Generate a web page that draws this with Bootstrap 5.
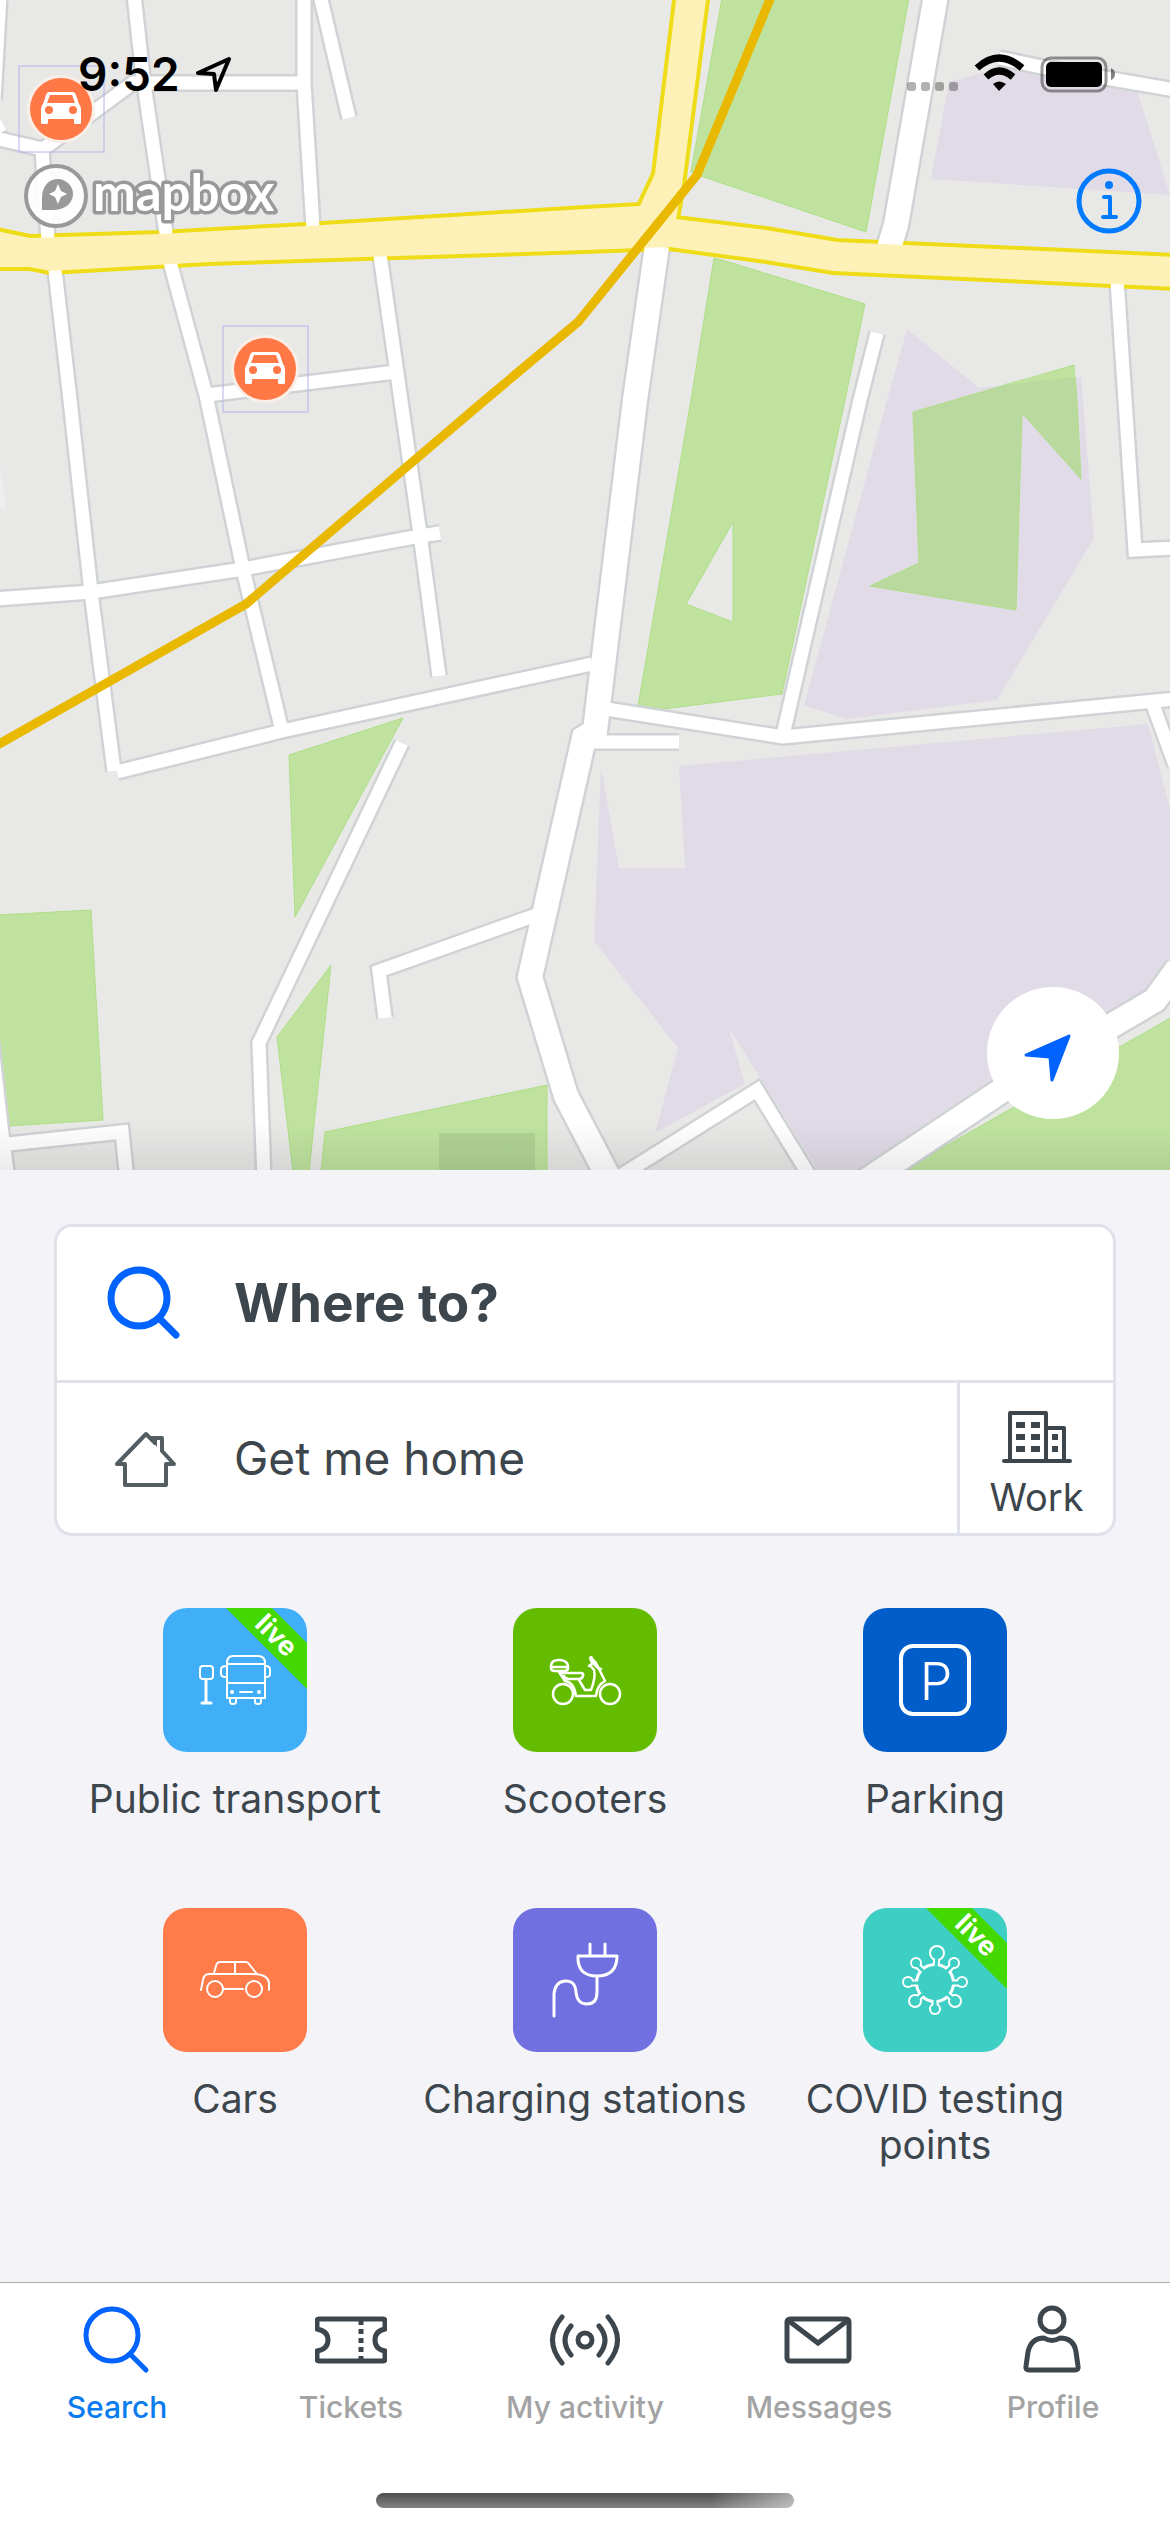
<!DOCTYPE html>
<html lang="en">
<head>
<meta charset="utf-8">
<meta name="viewport" content="width=device-width, initial-scale=1">
<title>Search</title>
<link href="https://cdn.jsdelivr.net/npm/bootstrap@5.3.0/dist/css/bootstrap.min.css" rel="stylesheet">
<style>
  :root { --ink: #3c464c; --line: #dfe2ea; --blue: #0062ff; --ios: #007aff; }
  body { background: #f3f3f8; color: var(--ink); font-family: Inter, "Liberation Sans", sans-serif; }
  svg { display: block; }
  a { color: inherit; text-decoration: none; }
  .map-area svg.map-canvas { width: 100%; height: auto; }
  .map-shade { bottom: 0; height: 48px; background: linear-gradient(rgba(0,0,0,0), rgba(0,0,0,.08)); }
  .status-bar { top: 0; padding: 44px 52px 0 78px; color: #000; }
  .clock { font-size: 46px; line-height: 60px; font-weight: 600; }
  .info-btn { top: 164px; right: 24px; }
  .locate-btn { right: 51px; bottom: 51px; width: 132px; height: 132px; background: #fff; }
  .search-wrap { padding: 54px 54px 0; }
  .search-card { border: 3px solid var(--line); border-radius: 18px; background: #fff; }
  .plain-btn { border: 0; background: none; color: inherit; text-align: left; padding: 0 0 0 51px; gap: 54px; }
  .plain-btn svg { overflow: visible; }
  .where-row { height: 156px; border-bottom: 3px solid var(--line); font-size: 53px; font-weight: 700; }
  .home-row { height: 150px; }
  .home-btn { font-size: 46px; }
  .work-btn { width: 156px; border: 0; border-left: 3px solid var(--line); background: none; color: inherit; padding: 27px 0 0; gap: 10px; font-size: 38px; line-height: 46px; }
  .services { padding: 72px 60px 0; }
  .service { height: 300px; gap: 24px; font-size: 39px; line-height: 46px; }
  .tile { width: 144px; height: 144px; border-radius: 24px; overflow: hidden; }
  .tile svg { fill: none; stroke: #fff; stroke-linecap: round; stroke-linejoin: round; }
  .tile text { fill: #fff; stroke: none; font-family: Inter, sans-serif; }
  .tile-transit { background: #40aff8; }
  .tile-scooter { background: #64bc00; }
  .tile-parking { background: #005dca; }
  .tile-cars { background: #ff7b4a; }
  .tile-charge { background: #7170e1; }
  .tile-covid { background: #3dcec4; }
  .tab-bar { background: #fff; border-top: 1px solid #a9aaac; padding: 21px 0 24px; }
  .tab-item { flex: 1 1 0; gap: 13px; font-size: 30px; line-height: 36px; font-weight: 500; color: #a3a3a3; }
  .tab-item svg { fill: none; stroke: var(--ink); stroke-width: 5; stroke-linecap: round; stroke-linejoin: round; }
  .tab-item.active { color: #0a7cf0; }
  .tab-item.active svg { stroke: var(--blue); }
  .home-bar { width: 418px; height: 15px; border-radius: 8px; margin-top: 68px; background: linear-gradient(90deg, rgba(255,255,255,0) 80%, rgba(255,255,255,.5)), linear-gradient(#4e4e4e, #828282); }
</style>
</head>
<body>
<div class="d-flex flex-column min-vh-100">

  <section class="map-area position-relative" aria-label="Map">
    <svg class="map-canvas" viewBox="0 0 1170 1170" aria-hidden="true">
      <defs>
        <g id="minor">
          <path d="M134 -5L143 77L167 240M170 262L206 395L243 569L282 731"/>
          <path d="M43 149L133 83H302"/>
          <path d="M304 -5V83L313 228M320 -5L349 118"/>
          <path d="M-5 138L42 149L48 240M55 270L70 400L91 592L114 771"/>
          <path d="M0 -5L-6 100M-8 130L3 124"/>
          <path d="M117 772L282 731L592 664"/>
          <path d="M-5 599L91 592L243 569L420 536L440 533"/>
          <path d="M380 255L397 373L420 534L439 676M207 395L396 372"/>
          <path d="M402 743L259 1043L264 1180"/>
          <path d="M536 915L379 971L385 1018"/>
          <path d="M877 333L860 400L783 735"/>
          <path d="M600 708L783 737L1175 699M592 742H679"/>
          <path d="M1117 280L1125 400L1135 550L1175 548M1153 705L1175 765"/>
          <path d="M999 58L1042 67L1175 90"/>
          <path d="M614 1180L757 1090L812 1180"/>
          <path d="M-12 1010L1 1126L8 1180M8 1144L122 1132L127 1180"/>
        </g>
        <g id="major">
          <path d="M657 246L635 400L595 731L584 738L530 977L566 1096L612 1184"/>
          <path d="M936 -5L896 225L889 248"/>
          <path d="M1178 968L1155 1000L1111 1026L1001 1091L860 1185"/>
        </g>
        <path id="avenue" d="M-8 230L30 238L160 234L306 226L585 209L640 206L655 174L677 -8H707L682 185L676 219L766 230L837 242L1178 257V287L833 271L766 260L669 247L585 250L209 262L50 271L30 267H-8Z"/>
        <g id="car-pin">
          <rect x="-42" y="-43" width="85" height="86" fill="none" stroke="#b5b2ee"/>
          <circle r="34" fill="#fbeee6"/>
          <circle r="31" fill="#ff7846"/>
          <path d="M-12 -17H12Q14 -17 15 -14L18 -5Q20 -3 20 0V14Q20 15 18 15H14Q13 15 13 13V10H-13V13Q-13 15 -14 15H-18Q-20 15 -20 14V0Q-20 -3 -18 -5L-15 -14Q-14 -17 -12 -17ZM-11 -14L-14 -6H14L11 -14ZM-12 -3A4 4 0 1 0 -12 5A4 4 0 1 0 -12 -3ZM12 -3A4 4 0 1 0 12 5A4 4 0 1 0 12 -3Z" fill="#fff" fill-rule="evenodd"/>
        </g>
      </defs>
      <path fill="#e8e9e7" d="M0 0H1170V1170H0Z"/>
      <g fill="#e1dbe7">
        <path d="M949 82L999 68L1137 90L1170 195L931 179Z"/>
        <path d="M907 329L979 388L1081 377L1083 400L1094 538L997 700L848 719L804 706L887 400Z"/>
        <path d="M679 766L1148 724L1170 808V975L1154 1000L850 1180H824L729 1028L745 1084L655 1133L678 1048L594 941L601 767L619 868H685Z"/>
      </g>
      <g fill="#bfe39f" stroke="#aede85" stroke-width="1">
        <path d="M722 -2H909L866 232L701 176L691 172Z"/>
        <path fill-rule="evenodd" d="M714 258L732 263L865 304L845 400L782 694L663 709L638 706L691 400ZM733 522V622L686 604Z"/>
        <path fill="#b9d99e" d="M1074 365L1077 400L1081 479L1022 413L1016 610L870 586L919 563L913 412Z"/>
        <path stroke="none" d="M1001 385L1074 366L1075 377Z"/>
        <path d="M289 755L403 718L295 917Z"/>
        <path d="M331 965L277 1037L293 1172H309Z"/>
        <path d="M-2 915L91 910L103 1120L8 1126L-2 1020Z"/>
        <path d="M325 1132L547 1085V1172H321Z"/>
        <path d="M1172 1017L900 1172H1172Z"/>
      </g>
      <path fill="#b0d494" d="M439 1133H535V1170H439Z"/>
      <path fill="#eeeeef" d="M0 465L6 508H0Z"/>
      <g fill="none" stroke="#d0d3d6">
        <use href="#minor" stroke-width="18"/>
        <use href="#major" stroke-width="29"/>
      </g>
      <use href="#avenue" fill="none" stroke="#efdc18" stroke-width="8"/>
      <g fill="none" stroke="#fff">
        <use href="#minor" stroke-width="13"/>
        <use href="#major" stroke-width="24"/>
      </g>
      <use href="#avenue" fill="#fef1b8"/>
      <path d="M773 -8L697 175L578 322L485 400L246 604L-8 748" fill="none" stroke="#e9b800" stroke-width="9"/>
      <use href="#car-pin" x="61" y="109"/>
      <use href="#car-pin" x="265" y="369"/>
      <circle cx="56" cy="196" r="30" fill="#fff" fill-opacity=".9" stroke="#999" stroke-width="4"/>
      <path d="M42 210V198C42 186 49 179 58 179C66 179 73 186 73 194C73 203 65 210 53 210Z" fill="#999"/>
      <path d="M58 184L61 191L67 194L61 197L58 204L55 197L49 194L55 191Z" fill="#fff"/>
      <text x="93" y="211" font-family="Lato, sans-serif" font-size="51" font-weight="700" fill="#fff" stroke="#999" stroke-width="7" stroke-linejoin="round" paint-order="stroke">mapbox</text>
    </svg>
    <div class="map-shade position-absolute start-0 end-0"></div>

    <div class="status-bar position-absolute start-0 end-0 d-flex justify-content-between">
      <div class="d-flex align-items-center gap-3">
        <span class="clock">9:52</span>
        <svg width="36" height="36" viewBox="0 0 36 36" fill="none" stroke="#000" stroke-width="4" stroke-linejoin="round" aria-hidden="true"><path d="M33 3L2 17L18 18L20 34Z"/></svg>
      </div>
      <svg width="211" height="60" viewBox="0 0 211 60" aria-hidden="true">
        <g fill="#000" opacity=".3"><rect y="38" width="9" height="9" rx="3"/><rect x="14" y="38" width="9" height="9" rx="3"/><rect x="28" y="38" width="9" height="9" rx="3"/><rect x="42" y="38" width="9" height="9" rx="3"/></g>
        <g fill="none" stroke="#000" stroke-width="7"><path d="M70 24Q92 4 115 24"/><path d="M79 33Q92 21 106 33"/></g>
        <path d="M86 40Q92 35 99 40L92 47Z"/>
        <rect x="135" y="14" width="64" height="33" rx="9" fill="none" stroke="#000" stroke-opacity=".4" stroke-width="3"/>
        <rect x="139" y="18" width="56" height="25" rx="5"/>
        <path d="M204 24Q208 26 208 30T204 36Z" opacity=".5"/>
      </svg>
    </div>

    <button class="info-btn btn p-0 border-0 position-absolute" type="button" aria-label="Information">
      <svg width="74" height="74" viewBox="0 0 74 74" fill="none" stroke="#007aff" stroke-width="5" stroke-linecap="round" stroke-linejoin="round"><circle cx="37" cy="37" r="30"/><path stroke-width="4" d="M32 33H38V53M31 53H44"/><circle cx="37" cy="21" r="4" fill="#007aff" stroke="none"/></svg>
    </button>
    <button class="locate-btn btn rounded-circle border-0 p-0 position-absolute" type="button" aria-label="My location">
      <svg width="132" height="132" viewBox="0 0 132 132" fill="#0062ff" stroke="#0062ff" stroke-width="3" stroke-linejoin="round"><path d="M82 49L39 68L63 70L65 93Z"/></svg>
    </button>
  </section>

  <main class="flex-grow-1">
    <div class="search-wrap">
      <div class="search-card">
        <button class="plain-btn where-row w-100 d-flex align-items-center" type="button">
          <svg width="72" height="72" viewBox="0 0 72 72" fill="none" stroke="#0062ff" stroke-width="7" stroke-linecap="round"><circle cx="31" cy="30" r="28"/><path d="M52 51L68 67"/></svg>
          <span>Where to?</span>
        </button>
        <div class="home-row d-flex">
          <button class="plain-btn home-btn flex-grow-1 d-flex align-items-center" type="button">
            <svg width="72" height="72" viewBox="0 0 72 72" fill="none" stroke="#535d62" stroke-width="4" stroke-linejoin="round" stroke-linecap="round"><path d="M47 21L38 12L9 42H17V63H58V42H66L54 29V16H43"/><path stroke="none" fill="#535d62" d="M42 16H49V25Z"/></svg>
            <span>Get me home</span>
          </button>
          <button class="work-btn d-flex flex-column align-items-center" type="button">
            <svg width="72" height="54" viewBox="0 0 72 54" fill="none" stroke="#3c464c" stroke-width="4" stroke-linejoin="round" stroke-linecap="round"><path d="M3 51H69M9 51V3H45V51M45 18H63V51"/><path stroke="none" fill="#3c464c" d="M15 12H24V18H15ZM30 12H39V18H30ZM15 24H24V30H15ZM30 24H39V30H30ZM15 36H24V42H15ZM30 36H39V42H30ZM51 24H57V30H51ZM51 36H57V42H51Z"/></svg>
            <span>Work</span>
          </button>
        </div>
      </div>
    </div>

    <nav class="services" aria-label="Services">
      <div class="row row-cols-3 g-0 text-center">
        <a class="col service d-flex flex-column align-items-center" href="#">
          <span class="tile tile-transit"><svg width="144" height="144" viewBox="0 0 144 144" stroke-width="2">
            <rect x="37" y="58" width="13" height="13" rx="3"/><path stroke-width="3" d="M43 72V94M39 95H48"/>
            <path d="M64 55Q64 48 70 48H95Q102 48 102 55V90H64ZM64 56H102M64 75H102M63 58Q58 58 58 62V66Q58 69 63 69M103 58Q107 58 107 62V66Q107 69 103 69M67 91V94Q67 96 70 96T73 94V91M92 91V94Q92 96 95 96T98 94V91M77 84H89"/>
            <circle cx="69" cy="84" r="2" fill="#fff" stroke="none"/><circle cx="96" cy="84" r="2" fill="#fff" stroke="none"/>
            <path d="M63 0H109L144 35V81Z" fill="#43d800" stroke="none"/>
            <text transform="translate(107 34) rotate(45)" text-anchor="middle" font-size="27" font-weight="700">live</text></svg></span>
          <span>Public transport</span>
        </a>
        <a class="col service d-flex flex-column align-items-center" href="#">
          <span class="tile tile-scooter"><svg width="144" height="144" viewBox="0 0 144 144" stroke-width="2.5">
            <circle cx="50" cy="86" r="10"/><circle cx="97" cy="86" r="10"/>
            <path d="M38 58Q38 52 46 52T55 58V60Q55 63 51 63H42Q38 63 38 60ZM39 59H55M47 65H68Q71 65 70 68T66 71H56Q52 71 51 68"/>
            <path d="M46 64L52 73Q61 74 63 88H83Q84 77 92 73L86 61M66 72L72 82H78Q83 69 81 62L77 57M86 60L88 61M76 58L80 55L86 61L83 55L79 51"/><path stroke-width="4" d="M78 50L79 53"/></svg></span>
          <span>Scooters</span>
        </a>
        <a class="col service d-flex flex-column align-items-center" href="#">
          <span class="tile tile-parking"><svg width="144" height="144" viewBox="0 0 144 144"><rect x="38" y="38" width="68" height="68" rx="12" stroke-width="4"/><text x="73" y="92" text-anchor="middle" font-size="52" font-weight="300">P</text></svg></span>
          <span>Parking</span>
        </a>
        <a class="col service d-flex flex-column align-items-center" href="#">
          <span class="tile tile-cars"><svg width="144" height="144" viewBox="0 0 144 144" stroke-width="2">
            <path d="M38 82L40 72Q41 66 46 66H89Q106 66 106 76V82M51 65L53 58Q54 54 57 54H83Q85 54 86 56L94 66M72 55V65M60 81H80"/><circle cx="52" cy="81" r="8"/><circle cx="91" cy="81" r="8"/></svg></span>
          <span>Cars</span>
        </a>
        <a class="col service d-flex flex-column align-items-center" href="#">
          <span class="tile tile-charge"><svg width="144" height="144" viewBox="0 0 144 144" stroke-width="3" stroke-linecap="butt">
            <path d="M77 36V48M92 36V48M65 48H104Q104 68 84 68T65 48ZM84 68V84Q84 96 74 96T63 84T52 73T41 86V108"/></svg></span>
          <span>Charging stations</span>
        </a>
        <a class="col service d-flex flex-column align-items-center" href="#">
          <span class="tile tile-covid"><svg width="144" height="144" viewBox="0 0 144 144">
            <defs><path id="stalks" d="M72 75L74 46M72 75L53 56M72 75L91 56M72 75H45M72 75H99M72 75L52 93M72 75L92 93M72 75V101"/></defs>
            <use href="#stalks" stroke-width="7"/>
            <g fill="#fff" stroke="none"><circle cx="72" cy="75" r="20"/><circle cx="74" cy="45" r="8"/><circle cx="53" cy="55" r="6"/><circle cx="91" cy="55" r="6"/><circle cx="45" cy="74" r="6"/><circle cx="99" cy="74" r="6"/><circle cx="52" cy="93" r="7"/><circle cx="92" cy="93" r="7"/><circle cx="72" cy="101" r="6"/></g>
            <use href="#stalks" stroke="#3dcec4" stroke-width="3"/>
            <g fill="#3dcec4" stroke="none"><circle cx="72" cy="75" r="17"/><circle cx="74" cy="45" r="6"/><circle cx="53" cy="55" r="4"/><circle cx="91" cy="55" r="4"/><circle cx="45" cy="74" r="4"/><circle cx="99" cy="74" r="4"/><circle cx="52" cy="93" r="5"/><circle cx="92" cy="93" r="5"/><circle cx="72" cy="101" r="4"/></g>
            <path d="M63 0H109L144 35V81Z" fill="#43d800" stroke="none"/>
            <text transform="translate(107 34) rotate(45)" text-anchor="middle" font-size="27" font-weight="700">live</text></svg></span>
          <span>COVID testing points</span>
        </a>
      </div>
    </nav>
  </main>

  <footer class="tab-bar d-flex flex-column align-items-center">
    <nav class="d-flex w-100" aria-label="Main">
      <a class="tab-item active d-flex flex-column align-items-center" href="#" aria-current="page">
        <svg width="72" height="72" viewBox="0 0 72 72"><circle cx="31" cy="31" r="26"/><path d="M50 51L65 66"/></svg>
        <span>Search</span>
      </a>
      <a class="tab-item d-flex flex-column align-items-center" href="#">
        <svg width="72" height="72" viewBox="0 0 72 72"><path d="M4 15H68Q70 15 70 17V25Q60 27 60 36T70 47V55Q70 57 68 57H4Q2 57 2 55V47Q13 45 13 36T2 25V17Q2 15 4 15Z"/><path stroke-linecap="butt" d="M46 15V21M46 25V30M46 34V39M46 43V48M46 52V57"/></svg>
        <span>Tickets</span>
      </a>
      <a class="tab-item d-flex flex-column align-items-center" href="#">
        <svg width="72" height="72" viewBox="0 0 72 72"><circle cx="36" cy="36" r="7"/><path d="M22 22Q10 36 22 51M50 22Q62 36 50 51M13 13Q-6 36 13 59M59 13Q78 36 59 59"/></svg>
        <span>My activity</span>
      </a>
      <a class="tab-item d-flex flex-column align-items-center" href="#">
        <svg width="72" height="72" viewBox="0 0 72 72"><rect x="4" y="15" width="62" height="42" rx="3"/><path stroke-linejoin="miter" d="M6 17L35 39L64 17"/></svg>
        <span>Messages</span>
      </a>
      <a class="tab-item d-flex flex-column align-items-center" href="#">
        <svg width="72" height="72" viewBox="0 0 72 72"><circle cx="35" cy="16" r="12"/><path d="M27 34Q35 39 43 34Q57 34 59 48L61 62Q62 66 58 66H12Q8 66 9 62L11 48Q14 34 27 34Z"/></svg>
        <span>Profile</span>
      </a>
    </nav>
    <div class="home-bar"></div>
  </footer>
</div>
<script src="https://cdn.jsdelivr.net/npm/bootstrap@5.3.0/dist/js/bootstrap.bundle.min.js"></script>
</body>
</html>
